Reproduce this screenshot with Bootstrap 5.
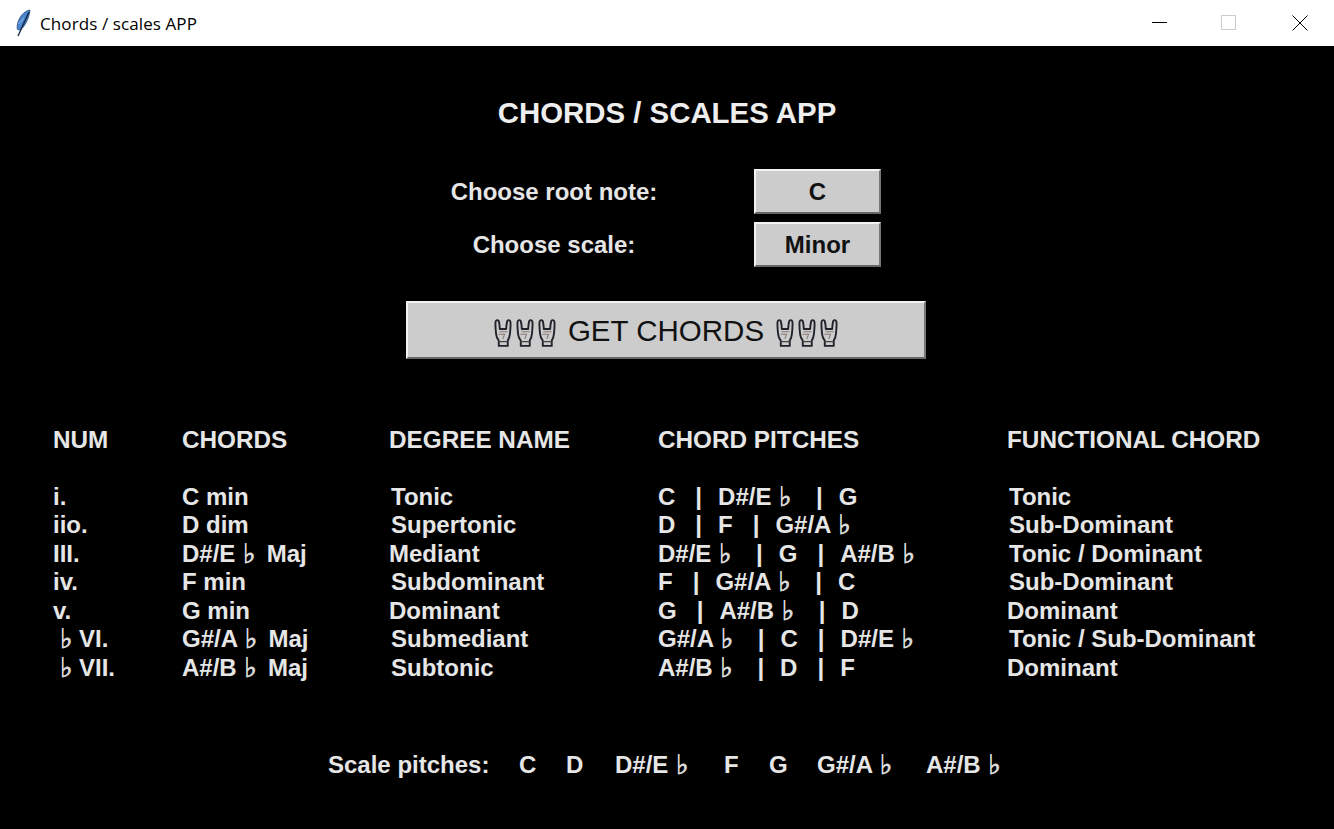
<!DOCTYPE html>
<html lang="en"><head><meta charset="utf-8"><title>Chords / scales APP</title>
<link href="https://cdn.jsdelivr.net/npm/bootstrap@5.3.0/dist/css/bootstrap.min.css" rel="stylesheet">
<style>
html,body{height:100%}
body{background:#000;color:#e6e6e6;font-family:"Liberation Sans",Arial,sans-serif;font-weight:700;overflow:hidden}
.app-window{height:829px}
.title-bar{height:46px;background:#fff;color:#000;font:400 17px "Open Sans","Noto Sans",sans-serif;letter-spacing:.1px}
.feather{width:16px;height:28px;margin-left:15px;margin-right:9px}
.win-btn{width:69px;height:46px}
.win-close{margin-left:2px}
.app-main{flex:1;background:#000;padding-top:50px;font-size:24px}
.app-title{font-size:29.400px;line-height:34px;height:34px;color:#eee}
.form-grid{display:grid;grid-template-columns:218px 127px;column-gap:91px;row-gap:8px;margin:39px 0 0 -8px}
.form-label-cell{text-align:center}
.tk-btn,.tk-btn:hover{--bs-btn-padding-x:0;--bs-btn-padding-y:0;background:#ccc;color:#111;border-radius:0;border-width:2px;border-style:solid;border-color:#f2f2f2 #777 #666 #f2f2f2}
.pick-btn{height:45px;width:127px;font-weight:700;font-size:24px;line-height:40px}
.go-btn{width:520px;height:58px;margin:34px 0 0 -2px;padding-top:2px;font-weight:400;font-size:29.500px;gap:12px}
.horns{display:inline-flex;gap:4px;margin-top:5px}
.horn{width:18px;height:29px}
.chord-grid{display:grid;grid-template-columns:129px 207px 269px 349px 1fr;margin:67px 0 0 53px;align-self:stretch;line-height:28.450px}
.chord-head{height:57px;line-height:28px;font-size:24.300px}
.nudge{padding-left:2px}
.flat{display:inline-block;width:18px;padding-left:1px;font:700 27px/0 "DejaVu Sans",sans-serif;vertical-align:-1px;color:#ddd;-webkit-text-stroke:.7px #ddd}
.lead-flat{margin-left:6px;width:20px}
.bar{margin-right:2.670px}
.scale-row{margin:68px 0 0 328px;align-self:stretch;line-height:30px}
.scale-lbl{width:191px}
.s1{width:47px}.s2{width:49px}.s3{width:109px}.s4{width:45px}.s5{width:48px}.s6{width:109px}
</style></head>
<body>
<div class="app-window d-flex flex-column">
  <header class="title-bar d-flex align-items-center">
    <svg class="feather" viewBox="0 0 16 28"><path d="M15 1C9 2 4 8 2.500 15c-.5 2.500-.5 4 0 5.500l3 .5C10 17 14 10 15 1z" fill="#4a86cf" stroke="#2a4a78" stroke-width=".8"/><path d="M14 3 3 27" stroke="#10233c" stroke-width="1.300" fill="none"/><path d="M3.500 15 9 9" stroke="#9cc4ee" stroke-width="1" fill="none"/></svg>
    <span>Chords / scales APP</span>
    <div class="d-flex ms-auto">
      <div class="win-btn d-flex align-items-center justify-content-center"><svg width="16" height="16" viewBox="0 0 16 16"><path d="M0 7.500h15" stroke="#000"/></svg></div>
      <div class="win-btn d-flex align-items-center justify-content-center"><svg width="16" height="16" viewBox="0 0 16 16"><rect x=".5" y=".5" width="14" height="14" fill="none" stroke="#ccc"/></svg></div>
      <div class="win-btn win-close d-flex align-items-center justify-content-center"><svg width="16" height="16" viewBox="0 0 16 16"><path d="M.5.500l15 15M15.500.500l-15 15" stroke="#000"/></svg></div>
    </div>
  </header>
  <main class="app-main d-flex flex-column align-items-center">
    <div class="app-title">CHORDS / SCALES APP</div>
    <div class="form-grid">
      <div class="form-label-cell align-self-center">Choose root note:</div><button class="btn tk-btn pick-btn">C</button>
      <div class="form-label-cell align-self-center">Choose scale:</div><button class="btn tk-btn pick-btn">Minor</button>
    </div>
    <button class="btn tk-btn go-btn d-flex align-items-center justify-content-center">
      <span class="horns" id="h1"></span><span>GET CHORDS</span><span class="horns" id="h2"></span>
    </button>
    <div class="chord-grid" id="grid"></div>
    <div class="scale-row d-flex" id="scale"></div>
  </main>
</div>
<script>
const sep='&nbsp;&nbsp;&nbsp;<span class="bar">|</span>&nbsp;&nbsp;';
const fx=s=>s.replace(/L\* ?/g,'<span class="flat lead-flat">\u266D</span>').replace(/b\*/g,'<span class="flat">\u266D</span>').replace(/\|/g,sep);
const horn='<svg class="horn" viewBox="1 1 16 27.500" fill="none" stroke-linejoin="round" stroke-linecap="round"><path d="M2.500 15.500C2 11 1.500 6 2 3.500 2.300 2 4.500 1.500 5 3c.6 2 .8 4.500 1 7.500h6c.2-3 .4-5.500 1-7.500.5-1.500 2.700-1 3 .5.500 2.500 0 7.500-.5 12-.2 2.500-1 4.500-2 6v5H5v-5c-1.200-1.500-2.300-4-2.500-6z" stroke="#22222a" stroke-width="1.800"/><path d="M5 22.500h8" stroke="#444" stroke-width="1.200"/><path d="M6 13h7M5 15.500h5.500L9 19.500" stroke="#8c7a78" stroke-width="1"/></svg>';
h1.innerHTML=h2.innerHTML=horn+horn+horn;
const rows=[
['NUM','CHORDS','DEGREE NAME','CHORD PITCHES','FUNCTIONAL CHORD'],
['i.','C min','>Tonic','C|D#/E b*|G','>Tonic'],
['iio.','D dim','>Supertonic','D|F|G#/A b*','>Sub-Dominant'],
['III.','D#/E b* Maj','Mediant','D#/E b*|G|A#/B b*','>Tonic / Dominant'],
['iv.','F min','>Subdominant','F|G#/A b*|C','>Sub-Dominant'],
['v.','G min','Dominant','G|A#/B b*|D','Dominant'],
['L* VI.','G#/A b* Maj','>Submediant','G#/A b*|C|D#/E b*','>Tonic / Sub-Dominant'],
['L* VII.','A#/B b* Maj','>Subtonic','A#/B b*|D|F','Dominant']];
grid.innerHTML=rows.map((r,i)=>r.map(c=>{let n=c[0]=='>';if(n)c=c.slice(1);return `<div class="${i?'':'chord-head '}${n?'nudge':''}">${fx(c)}</div>`}).join('')).join('');
scale.innerHTML=[['scale-lbl','Scale pitches:'],['s1','C'],['s2','D'],['s3','D#/E b*'],['s4','F'],['s5','G'],['s6','G#/A b*'],['','A#/B b*']].map(([k,t])=>`<span class="${k}">${fx(t)}</span>`).join('');
</script>
<script src="https://cdn.jsdelivr.net/npm/bootstrap@5.3.0/dist/js/bootstrap.bundle.min.js"></script>
</body></html>
